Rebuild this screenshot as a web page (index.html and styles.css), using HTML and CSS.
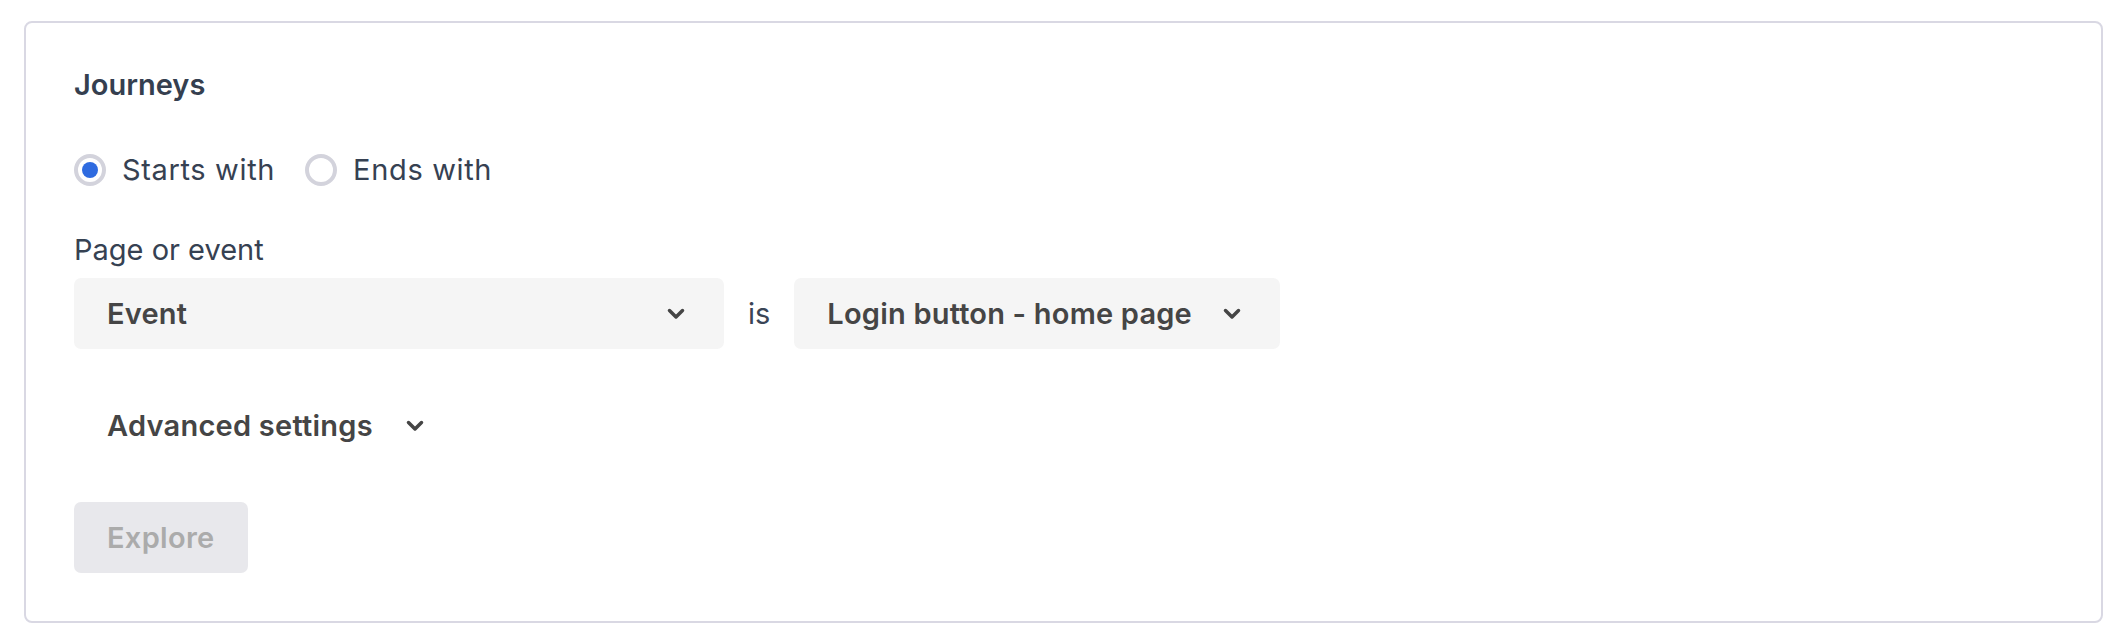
FILE: index.html
```html
<!DOCTYPE html>
<html lang="en">
<head>
<meta charset="utf-8">
<title>Journeys</title>
<link rel="stylesheet" href="styles.css">
</head>
<body>
<div class="page">
  <section class="card">
    <h2 class="title">Journeys</h2>
    <div class="radios">
      <label class="radio">
        <span class="ring checked"><span class="dot"></span></span>
        <span class="radio-text">Starts with</span>
      </label>
      <label class="radio">
        <span class="ring"></span>
        <span class="radio-text">Ends with</span>
      </label>
    </div>
    <div class="field-label">Page or event</div>
    <div class="filter-row">
      <div class="select select-wide">
        <span class="select-text">Event</span>
        <svg class="chevron" width="18" height="12" viewBox="0 0 18 12" aria-hidden="true"><path d="M2.5 2.5 L9 9 L15.5 2.5" /></svg>
      </div>
      <span class="is">is</span>
      <div class="select">
        <span class="select-text">Login button - home page</span>
        <svg class="chevron" width="18" height="12" viewBox="0 0 18 12" aria-hidden="true"><path d="M2.5 2.5 L9 9 L15.5 2.5" /></svg>
      </div>
    </div>
    <button class="advanced" type="button">
      <span>Advanced settings</span>
      <svg class="chevron" width="18" height="12" viewBox="0 0 18 12" aria-hidden="true"><path d="M2.5 2.5 L9 9 L15.5 2.5" /></svg>
    </button>
    <button class="explore" type="button" disabled>Explore</button>
  </section>
</div>
</body>
</html>
```

FILE: styles.css
```css
* {
  box-sizing: border-box;
}

html, body {
  margin: 0;
  padding: 0;
  background: #ffffff;
}

body {
  font-family: "Inter", "Noto Sans", "Liberation Sans", sans-serif;
  font-size: 29px;
  color: #364152;
}

.page {
  padding: 21px 15px 15px 24px;
}

.card {
  border: 2px solid #d9d8e3;
  border-radius: 8px;
  padding: 41px 48px 48px 48px;
  display: flex;
  flex-direction: column;
  align-items: flex-start;
}

.title {
  margin: 0;
  font-size: 29px;
  line-height: 42px;
  font-weight: 600;
  color: #353f4f;
}

.radios {
  margin-top: 48px;
  height: 32px;
  display: flex;
  align-items: center;
  gap: 30px;
}

.radio {
  display: flex;
  align-items: center;
  gap: 16px;
  line-height: 32px;
  color: #364152;
}

.radio-text {
  letter-spacing: 0.65px;
}

.ring {
  width: 32px;
  height: 32px;
  border-radius: 50%;
  border: 4px solid #d3d3dc;
  background: #ffffff;
  display: flex;
  align-items: center;
  justify-content: center;
  flex: none;
}

.dot {
  width: 16px;
  height: 16px;
  border-radius: 50%;
  background: #2f6be0;
}

.field-label {
  margin-top: 43px;
  line-height: 42px;
  color: #364152;
}

.filter-row {
  margin-top: 7px;
  display: flex;
  align-items: center;
  height: 71px;
}

.select {
  height: 71px;
  padding: 0 39px 0 33px;
  background: #f5f5f5;
  border-radius: 7px;
  display: flex;
  align-items: center;
  gap: 31px;
  font-weight: 600;
  letter-spacing: 0.2px;
  color: #454545;
}

.select-wide {
  width: 650px;
  justify-content: space-between;
}

.select-text {
  line-height: 42px;
}

.is {
  margin: 0 24px;
  color: #3a4556;
}

.chevron {
  flex: none;
  display: block;
}

.chevron path {
  fill: none;
  stroke: #454545;
  stroke-width: 3.5;
  stroke-linecap: round;
  stroke-linejoin: round;
}

.advanced {
  margin-top: 41px;
  height: 71px;
  padding: 0 33px;
  border: 0;
  background: transparent;
  display: flex;
  align-items: center;
  gap: 33px;
  font-family: inherit;
  font-size: 29px;
  font-weight: 600;
  letter-spacing: 0.25px;
  color: #454545;
}

.explore {
  margin-top: 41px;
  height: 71px;
  padding: 0 33px;
  border: 0;
  border-radius: 7px;
  background: #e8e8ec;
  font-family: inherit;
  font-size: 29px;
  font-weight: 600;
  letter-spacing: 0.3px;
  color: #ababab;
}
```
